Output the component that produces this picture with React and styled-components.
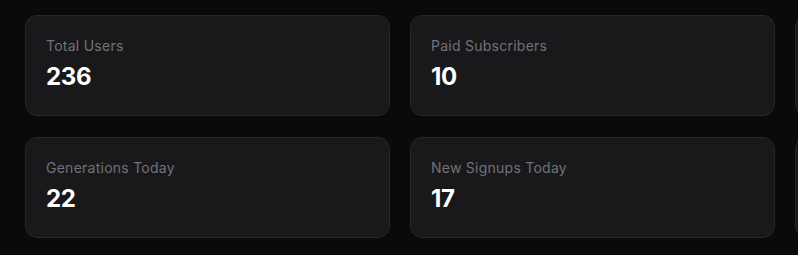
import React from "react";
import styled, { createGlobalStyle } from "styled-components";

const Global = createGlobalStyle`
  html, body { margin: 0; padding: 0; background: #0a0a0b; overflow: hidden; }
  body { font-family: "Inter", "Noto Sans", sans-serif; }
`;

const Page = styled.div`
  box-sizing: border-box;
  width: 100vw;
  height: 100vh;
  overflow: hidden;
  padding: 15px 0 0 25px;
`;

const Grid = styled.div`
  display: grid;
  grid-template-columns: repeat(3, 365px);
  column-gap: 20px;
  row-gap: 21px;
`;

const Card = styled.div`
  box-sizing: border-box;
  height: 101px;
  padding: 20px 20px 20px;
  background: #19191b;
  border: 1px solid #27272a;
  border-radius: 12px;
  display: flex;
  flex-direction: column;
  gap: 3px;
`;

const Label = styled.div`
  font-size: 14px;
  line-height: 20px;
  color: #71717a;
  letter-spacing: 0.25px;
`;

const Value = styled.div`
  font-size: 24px;
  line-height: 36px;
  font-weight: 700;
  color: #ffffff;
  letter-spacing: -0.3px;
`;

const stats = [
  { label: "Total Users", value: "236" },
  { label: "Paid Subscribers", value: "10" },
  { label: "", value: "" },
  { label: "Generations Today", value: "22" },
  { label: "New Signups Today", value: "17" },
  { label: "", value: "" },
];

export default function App() {
  return (
    <>
      <Global />
      <Page>
        <Grid>
          {stats.map((s, i) => (
            <Card key={i}>
              <Label>{s.label}</Label>
              <Value>{s.value}</Value>
            </Card>
          ))}
        </Grid>
      </Page>
    </>
  );
}
